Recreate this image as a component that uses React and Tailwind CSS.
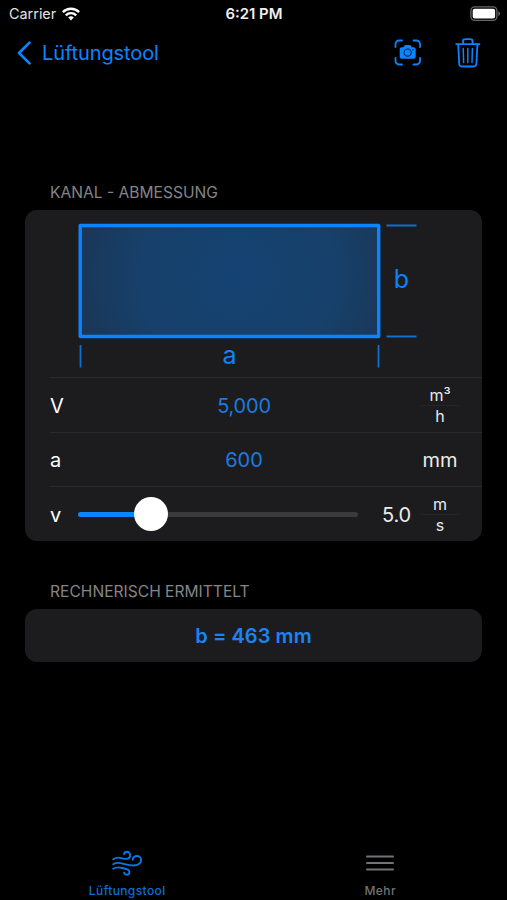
import React from 'react';

const WifiIcon = () => (
  <svg width="18" height="14" viewBox="0 0 18 14" fill="none" stroke="#fff" strokeWidth="2.4">
    <path d="M0.9 5.1a11.6 11.6 0 0 1 16.2 0" />
    <path d="M3.8 8.3a7.4 7.4 0 0 1 10.4 0" />
    <path d="M9 13.4 6.2 10.6a4 4 0 0 1 5.6 0Z" fill="#fff" stroke="none" />
  </svg>
);

const BatteryIcon = () => (
  <svg width="31" height="16" viewBox="0 0 31 16">
    <rect x="0.9" y="0.9" width="26" height="13.4" rx="3.8" fill="none" stroke="#68686a" strokeWidth="1.3" />
    <rect x="2.7" y="2.7" width="22.4" height="9.8" rx="2" fill="#fff" />
    <path d="M28.3 5.2v4.8c1.1-.4 1.8-1.3 1.8-2.4s-.7-2-1.8-2.4Z" fill="#68686a" />
  </svg>
);

const ScanIcon = () => (
  <svg width="28" height="28" viewBox="0 0 28 28" fill="none" stroke="#0a84ff" strokeWidth="1.8" strokeLinecap="round">
    <path d="M1.5 8V5a3.5 3.5 0 0 1 3.5-3.5H8M19.5 1.5h3A3.5 3.5 0 0 1 26 5v3M26 19v3a3.5 3.5 0 0 1-3.5 3.5h-3M8 25.5H5A3.5 3.5 0 0 1 1.5 22v-3" />
    <path
      d="M7.8 8.2h1.5l1.2-1.6c.3-.4.6-.6 1.1-.6h4c.5 0 .8.2 1.1.6l1.2 1.600h1.7c1.4 0 2.1.7 2.1 2v7.5c0 1.3-.7 2-2.1 2H7.8c-1.4 0-2.1-.7-2.1-2v-7.5c0-1.3.7-2 2.1-2Z"
      fill="#0a84ff"
      stroke="none"
    />
    <circle cx="13.7" cy="13.6" r="3.6" stroke="#04294f" strokeWidth="1.1" />
    <circle cx="19" cy="10.7" r="0.8" fill="#04294f" stroke="none" />
  </svg>
);

const TrashIcon = () => (
  <svg width="26" height="30" viewBox="0 0 26 30" fill="none" stroke="#0a84ff" strokeWidth="1.8" strokeLinecap="round" strokeLinejoin="round">
    <path d="M1.2 6.2h23.2" />
    <path d="M8 6V3.6C8 2.1 8.9 1.2 10.4 1.2h4.8c1.5 0 2.4.9 2.4 2.4V6" />
    <path d="M3.2 6.5 4.2 25.8c.1 1.7 1.2 2.7 2.8 2.7h11.600c1.6 0 2.7-1 2.8-2.7L22.4 6.5" />
    <path d="M8.2 10.5 8.6 24.5M12.8 10.5v14M17.4 10.5 17 24.5" strokeWidth="1.5" />
  </svg>
);

const WindIcon = () => (
  <svg width="31" height="26" viewBox="0 0 31 26" fill="none" stroke="#0a76e3" strokeWidth="1.9" strokeLinecap="round">
    <path d="M1.3 9.3c3.3-2.6 6-1.9 9-1 3.6 1 7.9 1 7.9-3 0-2-1.4-3.5-3.2-3.5-1.6 0-2.7 1-2.9 2.4" />
    <path d="M1.3 14.2c4-2.5 7-1.2 10.5-.3 5.2 1.4 9.3 2.4 13.2 1 2.600-.9 4.1-2.7 4.1-4.9 0-2.3-1.8-4-4.1-4-2.4 0-3.9 1.5-4.3 3.8" />
    <path d="M1.3 18.8c3.3-2.2 6-1.6 9-.8 3.6 1 7.1 1 7.1 4 0 1.6-1.1 2.7-2.6 2.7-1.4 0-2.3-.7-2.7-2" />
  </svg>
);

const DuctDiagram = () => (
  <svg width="457" height="167" viewBox="0 0 457 167" className="block">
    <defs>
      <radialGradient id="duct" gradientUnits="userSpaceOnUse" cx="212" cy="66" r="180">
        <stop offset="0" stopColor="#144272" />
        <stop offset="0.55" stopColor="#17406a" />
        <stop offset="1" stopColor="#1a3451" />
      </radialGradient>
    </defs>
    <rect x="55.2" y="15.5" width="298.5" height="111" fill="url(#duct)" stroke="#0a84ff" strokeWidth="3.4" strokeLinejoin="round" />
    <g stroke="#0e6fd0" strokeWidth="1.8">
      <path d="M361.5 15.5h30M361.5 126.5h30M55.5 135v22.5M353.5 135v22.5" />
    </g>
    <g fill="#0a84ff" fontFamily="Inter, sans-serif" fontSize="25" textAnchor="middle">
      <text x="204.5" y="154">a</text>
      <text x="376.5" y="77.5">b</text>
    </g>
  </svg>
);

const Fraction = ({ top, bottom }) => (
  <div className="flex w-[38px] flex-col items-center text-[16px] leading-[18px] text-[#ebebeb]">
    <span>{top}</span>
    <span className="my-px h-px w-full bg-[#252527]" />
    <span>{bottom}</span>
  </div>
);

const SectionTitle = ({ children }) => (
  <h2 className="ml-[50px] text-[15.6px] leading-5 whitespace-nowrap text-[#858587]">{children}</h2>
);

const App = () => {
  const velocity = 5;
  const filled = 72.5;

  return (
    <div className="flex h-[900px] w-[507px] flex-col overflow-hidden bg-black font-['Inter',sans-serif] text-white">
      {/* Status bar */}
      <div className="grid h-7 grid-cols-3 items-center pr-[6px] pl-[9px]">
        <div className="flex items-center gap-[6px] text-[14.4px] text-[#e2e2e2]">
          <span>Carrier</span>
          <WifiIcon />
        </div>
        <div className="pr-[2px] text-center text-[14.9px] font-semibold text-[#f0f0f0]">6:21 PM</div>
        <div className="flex justify-end"><BatteryIcon /></div>
      </div>

      {/* Navigation bar */}
      <header className="flex h-[50px] items-center justify-between pr-[26px] pl-[17px]">
        <button className="flex items-center gap-[10px] text-[20px] tracking-[-0.1px] text-[#0a84ff]">
          <svg width="15" height="24" viewBox="0 0 15 24" fill="none" stroke="#0a84ff" strokeWidth="2.7" strokeLinecap="round" strokeLinejoin="round">
            <path d="M12.5 1.6 2 12l10.5 10.4" />
          </svg>
          <span className="pb-px">Lüftungstool</span>
        </button>
        <div className="flex items-center gap-[33px]">
          <ScanIcon />
          <TrashIcon />
        </div>
      </header>

      <main className="flex-1">
        <section className="pt-[105px]">
          <SectionTitle>KANAL - ABMESSUNG</SectionTitle>
          <div className="mt-[7px] ml-[25px] h-[331px] w-[457px] overflow-hidden rounded-xl bg-[#1c1c1e]">
            <DuctDiagram />
            <div className="ml-[25px] border-t border-[#2a2a2c] text-[20px]">
              <div className="flex h-[54px] items-center pt-px pr-[23px]">
                <span className="w-[38px]">V</span>
                <span className="mr-[21px] flex-1 text-center tracking-[-0.2px] text-[#1a7be0]">5,000</span>
                <Fraction top="m³" bottom="h" />
              </div>
              <div className="flex h-[54px] items-center border-t border-[#2a2a2c] pr-[23px]">
                <span className="w-[38px]">a</span>
                <span className="mr-[21px] flex-1 text-center text-[#1a7be0]">600</span>
                <span className="flex w-[38px] justify-center text-[#ebebeb]">mm</span>
              </div>
              <div className="flex h-[56px] items-center border-t border-[#2a2a2c] pr-[23px]">
                <span className="w-[28px]">v</span>
                <div className="relative h-[5px] w-[280px] rounded-full bg-[#3a3a3c]">
                  <div className="h-full rounded-full bg-[#0a84ff]" style={{ width: filled }} />
                  <div
                    className="absolute top-1/2 size-[34px] -translate-x-1/2 -translate-y-[18px] rounded-full bg-white"
                    style={{ left: filled }}
                  />
                </div>
                <span className="ml-auto tracking-[-0.2px] text-[#ebebeb]">{velocity.toFixed(1)}</span>
                <div className="ml-[10px]"><Fraction top="m" bottom="s" /></div>
              </div>
            </div>
          </div>
        </section>

        <section className="pt-[41px]">
          <SectionTitle>RECHNERISCH ERMITTELT</SectionTitle>
          <div className="mt-[7px] ml-[25px] flex h-[53px] w-[457px] items-center justify-center rounded-xl bg-[#1c1c1e] pt-px text-[20px] font-semibold tracking-[0.05px] text-[#1a84f5]">
            b = 463 mm
          </div>
        </section>
      </main>

      {/* Tab bar */}
      <nav className="grid h-[50px] grid-cols-2 text-[12px] leading-[14px] font-medium tracking-[0.4px]">
        <div className="flex flex-col items-center text-[#0a6fd6]">
          <div className="pl-[2px]"><WindIcon /></div>
          <span className="mt-[8px] pl-px">Lüftungstool</span>
        </div>
        <div className="flex flex-col items-center text-[#737375]">
          <svg width="30" height="26" viewBox="0 0 30 26" stroke="#737375" strokeWidth="2" strokeLinecap="round">
            <path d="M2 6.5h26M2 13h26M2 19.5h26" />
          </svg>
          <span className="mt-[8px]">Mehr</span>
        </div>
      </nav>
    </div>
  );
};

export default App;
